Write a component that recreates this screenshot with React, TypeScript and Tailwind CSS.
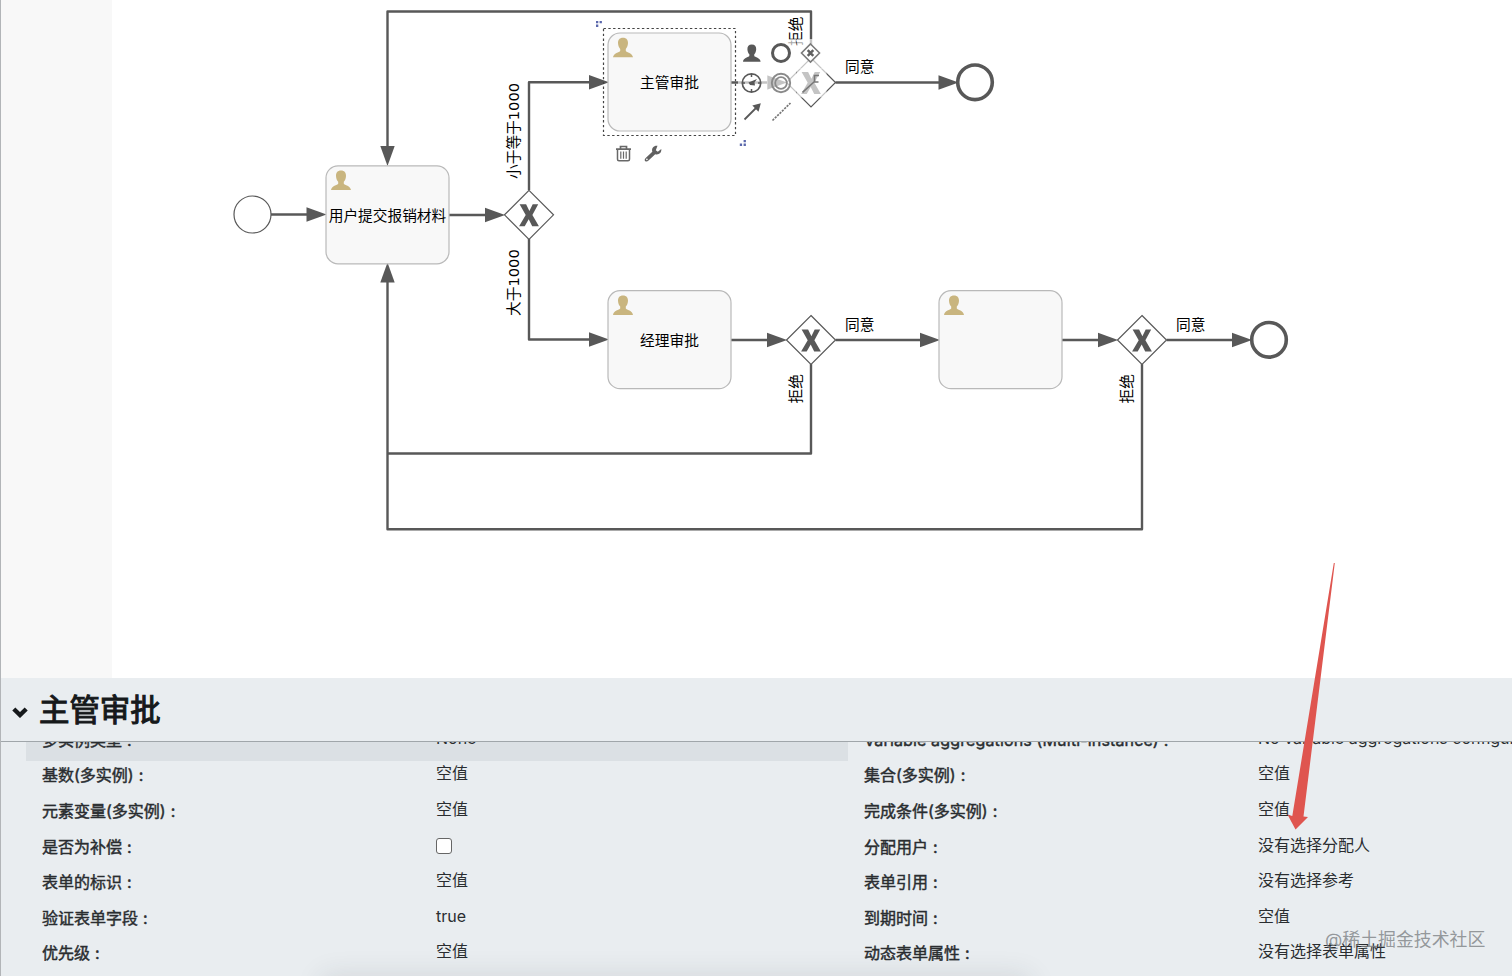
import React from "react";

const LINE = "#585858";

function Head({ x, y, r = 0 }: { x: number; y: number; r?: number }) {
  return <path d="M0 0L-20 -7.2V7.2Z" fill={LINE} transform={`translate(${x} ${y}) rotate(${r})`} />;
}

function Flow({ d, x, y, r }: { d: string; x: number; y: number; r?: number }) {
  return (
    <g>
      <path d={d} fill="none" stroke={LINE} strokeWidth={2.4} strokeLinejoin="round" />
      <Head x={x} y={y} r={r} />
    </g>
  );
}

function Person({ x, y, fill, s = 1 }: { x: number; y: number; fill: string; s?: number }) {
  return (
    <path
      transform={`translate(${x} ${y}) scale(${s})`}
      fill={fill}
      d="M10 0C13.4 0 15.1 2.2 15 5.4C14.9 8 14 10 12.8 11.2V13.2C13.5 14.6 19.6 15.2 20 19.6H0C.4 15.2 6.5 14.6 7.2 13.2V11.2C6 10 5.1 8 5 5.4C4.9 2.2 6.6 0 10 0Z"
    />
  );
}

function Task({ x, y, label }: { x: number; y: number; label?: string }) {
  return (
    <g>
      <rect x={x} y={y} width={123} height={98} rx={12} fill="#f8f8f8" stroke="#b9b9b9" strokeWidth={1.2} />
      <Person x={x + 5} y={y + 4.7} fill="#c9b57f" />
      {label && (
        <text x={x + 61.5} y={y + 55.3} textAnchor="middle">
          {label}
        </text>
      )}
    </g>
  );
}

function Gateway({ x, y }: { x: number; y: number }) {
  return (
    <g>
      <path d={`M${x} ${y - 24.5}L${x + 24.5} ${y}L${x} ${y + 24.5}L${x - 24.5} ${y}Z`} fill="#fff" stroke={LINE} strokeWidth={1.2} />
      <path
        transform={`translate(${x} ${y + 0.4})`}
        fill={LINE}
        d="M-9.4 -11H-2.9L.4 -4.2L3.7 -11H9.2L3.4 -.2L9.9 11H3.2L-.3 4L-4.3 11H-9.9L-3.3 -.2Z"
      />
    </g>
  );
}

function Vertical({ x, y, children }: { x: number; y: number; children: string }) {
  return <text transform={`translate(${x} ${y}) rotate(-90)`}>{children}</text>;
}

function ContextPad() {
  const cells = [
    [738, 39], [767, 39], [797, 39],
    [738, 68], [767, 68], [797, 68],
    [738, 98], [767, 98],
  ];
  return (
    <g fill="none" stroke={LINE}>
      {cells.map(([x, y]) => (
        <rect key={`${x}-${y}`} x={x} y={y} width={29.5} height={29.5} fill="#fff" fillOpacity={0.65} stroke="none" />
      ))}
      <g stroke="none">
        <Person x={743} y={44.5} s={0.88} fill={LINE} />
      </g>
      <circle cx={781} cy={53} r={8.5} strokeWidth={3} />
      <g stroke="#7a7a7a" strokeWidth={1.6}>
        <path d="M810.5 44L819.5 53L810.5 62L801.5 53Z" fill="#fff" />
        <path d="M807.7 50.2L813.3 55.8M813.3 50.2L807.7 55.8" stroke="#606060" strokeWidth={2.5} />
      </g>
      <circle cx={751.5} cy={83} r={9.2} strokeWidth={1.7} />
      <path d="M751.5 74V77M751.5 89V92M742 83H745M758 83H761" strokeWidth={1.5} />
      <path d="M748.5 82.5L757 79L754.5 82.5L755 85.5L750 85Z" fill={LINE} stroke="none" />
      <g stroke="#8a8a8a">
        <circle cx={781} cy={83} r={9.2} strokeWidth={1.9} />
        <circle cx={781} cy={83} r={5.8} strokeWidth={1.8} />
      </g>
      <path d="M802.5 92.3L814.5 81.5M819 75.5H814.5V82H818.5" stroke="#777" strokeWidth={1.6} />
      <path d="M744.5 119.5L757 107" strokeWidth={1.8} />
      <path d="M760.8 103.2L758.5 111.8L752.3 105.6Z" fill={LINE} stroke="none" />
      <path d="M772.5 120.5L790.5 103" stroke="#777" strokeWidth={1.7} strokeDasharray="2.2 1.1" />
      <g stroke="#686868">
        <path d="M616 149.2H631M620.5 149V146.5H626.5V149" strokeWidth={1.7} />
        <path d="M617.5 150V159.3Q617.5 160.8 619 160.8H628Q629.5 160.8 629.5 159.3V150" strokeWidth={1.5} />
        <path d="M620.8 151.5V158.8M623.5 151.5V158.8M626.2 151.5V158.8" strokeWidth={1.2} />
      </g>
      <path
        d="M657.5 145.8L655.8 150.2L657.8 151.8L661.3 149C661.7 153 658.7 155.1 655.2 154.2L648.5 160.6C646 163 643.2 160.3 645.7 157.9L652.3 151.7C651.3 148 654 145.3 657.5 145.8Z"
        fill="#606060"
        stroke="none"
      />
      <circle cx={646.9} cy={159.4} r={0.8} fill="#fff" stroke="none" />
      <g fill="#5b68ac" stroke="none">
        <path d="M596 21h2.3v2.3h-2.3zM599.6 21h2.3v2.3h-2.3zM596 24.6h2.3v2.3h-2.3z" />
        <path d="M743.6 140h2.3v2.3h-2.3zM739.8 143.6h2.3v2.3h-2.3zM743.6 143.6h2.3v2.3h-2.3z" />
      </g>
    </g>
  );
}

function Diagram() {
  return (
    <svg
      width={1400}
      height={678}
      viewBox="112 0 1400 678"
      className="block shrink-0 bg-white font-['DejaVu_Sans','Noto_Sans_CJK_SC',sans-serif] text-[14.7px]"
      fill="#000"
    >
      <Flow d="M811 58V11.5H387.5V150" x={387.5} y={166} r={90} />
      <Flow d="M271 214.5H308" x={326.5} y={214.5} />
      <Flow d="M449 215H490" x={505} y={215} />
      <Flow d="M529 190V82.3H592" x={609} y={82.3} />
      <Flow d="M529 239V339.5H592" x={609} y={339.5} />
      <Flow d="M731 82.5H772" x={787} y={82.5} />
      <Flow d="M835.5 82.5H940" x={958.5} y={82.5} />
      <Flow d="M731 340H770" x={787} y={340} />
      <Flow d="M835.5 340H922" x={940} y={340} />
      <Flow d="M1062 340H1100" x={1118} y={340} />
      <Flow d="M1166.5 340H1235" x={1252} y={340} />
      <path d="M811 364V453.5H387.5" fill="none" stroke={LINE} strokeWidth={2.4} strokeLinejoin="round" />
      <Flow d="M1142 364V529.3H387.5V280" x={387.5} y={262.5} r={-90} />
      <circle cx={252.5} cy={214.5} r={18.5} fill="#fff" stroke={LINE} strokeWidth={1.2} />
      <circle cx={975} cy={82.3} r={17.3} fill="#fff" stroke={LINE} strokeWidth={3.6} />
      <circle cx={1269} cy={339.8} r={17.3} fill="#fff" stroke={LINE} strokeWidth={3.6} />
      <Task x={326} y={165.8} label="用户提交报销材料" />
      <Task x={608} y={33} label="主管审批" />
      <Task x={608} y={290.7} label="经理审批" />
      <Task x={939} y={290.7} />
      <Gateway x={529} y={214.8} />
      <Gateway x={811} y={82.5} />
      <Gateway x={811} y={340} />
      <Gateway x={1142} y={340} />
      <text x={845} y={72.3}>同意</text>
      <text x={845} y={329.6}>同意</text>
      <text x={1176} y={329.6}>同意</text>
      <Vertical x={518.5} y={179}>小于等于1000</Vertical>
      <Vertical x={518.5} y={316}>大于1000</Vertical>
      <Vertical x={801} y={46}>拒绝</Vertical>
      <Vertical x={801} y={403.5}>拒绝</Vertical>
      <Vertical x={1132} y={403.5}>拒绝</Vertical>
      <rect x={603.5} y={28.5} width={132} height={107} fill="none" stroke="#444" strokeWidth={1.2} strokeDasharray="2.4 2.4" />
      <ContextPad />
    </svg>
  );
}

type Field = { label: string; value: string; checkbox?: boolean; active?: boolean };

const left: Field[] = [
  { label: "多实例类型", value: "None", active: true },
  { label: "基数(多实例)", value: "空值" },
  { label: "元素变量(多实例)", value: "空值" },
  { label: "是否为补偿", value: "", checkbox: true },
  { label: "表单的标识", value: "空值" },
  { label: "验证表单字段", value: "true" },
  { label: "优先级", value: "空值" },
];

const right: Field[] = [
  { label: "Variable aggregations (Multi-instance)", value: "No variable aggregations configured" },
  { label: "集合(多实例)", value: "空值" },
  { label: "完成条件(多实例)", value: "空值" },
  { label: "分配用户", value: "没有选择分配人" },
  { label: "表单引用", value: "没有选择参考" },
  { label: "到期时间", value: "空值" },
  { label: "动态表单属性", value: "没有选择表单属性" },
];

function FieldRow({ label, value, checkbox, active }: Field) {
  const latin = label.startsWith("Variable");
  return (
    <div className={`flex h-[35.6px] shrink-0 pl-4 ${active ? "bg-[#dbe0e4]" : ""}`}>
      <div className={`w-[394px] shrink-0 whitespace-nowrap pt-0.5 leading-6 [-webkit-text-stroke:0.45px_#2a2d30] ${latin ? "tracking-[0.14px]" : ""}`}>
        {label}
        <span className="ml-[5px]">:</span>
      </div>
      <div className="whitespace-nowrap leading-6">
        {checkbox ? <input type="checkbox" className="mt-[5px] block size-4 appearance-none rounded-[3px] border border-[#666] bg-white" /> : value}
      </div>
    </div>
  );
}

export default function App() {
  return (
    <div className="relative flex h-[976px] w-[1512px] flex-col overflow-hidden border-l border-[#b2b5b8] bg-[#e9edf0] font-['Inter','Noto_Sans_CJK_SC',sans-serif] text-[#2a2d30]">
      <main className="flex h-[678px] shrink-0">
        <aside className="w-[111px] shrink-0 bg-[#f8f8f8]" />
        <Diagram />
      </main>
      <header className="flex h-16 shrink-0 items-center border-b border-[#a0a6aa] pl-[11px]">
        <svg width={16} height={11} viewBox="0 0 16 11" className="mt-1.5">
          <path d="M1.8 2L8 8L14.2 2" fill="none" stroke="#16191b" strokeWidth={4.4} />
        </svg>
        <h1 className="ml-[11px] text-[30.4px] leading-10 text-[#16191b] [-webkit-text-stroke:1.1px_#16191b]">主管审批</h1>
      </header>
      <section className="relative flex h-[234px] overflow-hidden pl-[25px] text-[16px]">
        <div className="-mt-[16.2px] flex w-[822px] shrink-0 flex-col">
          {left.map((f) => <FieldRow key={f.label} {...f} />)}
        </div>
        <div className="-mt-[16.2px] flex w-[664px] shrink-0 flex-col">
          {right.map((f) => <FieldRow key={f.label} {...f} />)}
        </div>
        <div className="pointer-events-none absolute -bottom-6 left-[325px] h-5 w-[700px] shadow-[0_0_28px_4px_rgba(40,50,60,0.12)]" />
      </section>
      <div className="absolute left-[1324px] top-[928px] whitespace-nowrap text-[17.9px] leading-6 text-[#7d8184]/80">@稀土掘金技术社区</div>
      <svg width={60} height={270} viewBox="1280 560 60 270" className="absolute left-[1279px] top-[560px]">
        <path d="M1334.8 563L1303.5 816.5L1308 817L1295.5 829.5L1287.5 814.5L1292.3 816L1333.8 563Z" fill="#df554f" />
      </svg>
    </div>
  );
}
